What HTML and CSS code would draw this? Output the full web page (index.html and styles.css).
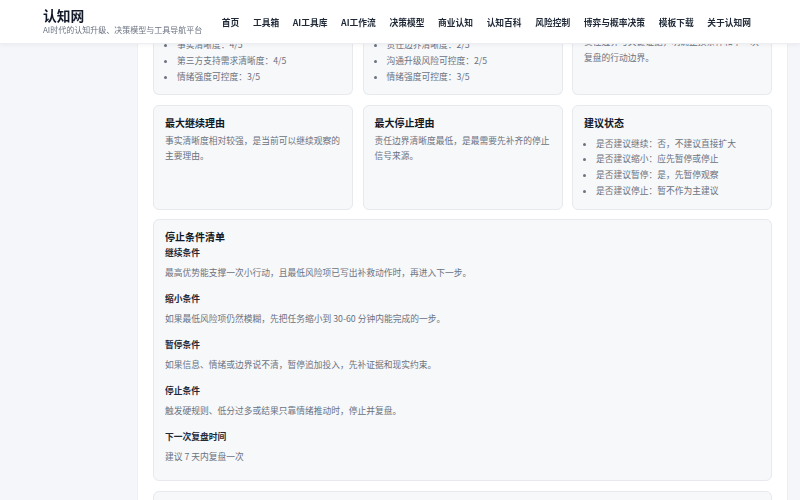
FILE: index.html
```html
<!DOCTYPE html>
<html lang="zh-CN">
<head>
<meta charset="utf-8">
<title>认知网</title>
<link rel="stylesheet" href="styles.css">
</head>
<body>
<header class="site-header">
  <div class="brand">
    <div class="brand-name">认知网</div>
    <div class="brand-sub">AI时代的认知升级、决策模型与工具导航平台</div>
  </div>
  <nav class="nav">
    <a>首页</a>
    <a>工具箱</a>
    <a>AI工具库</a>
    <a>AI工作流</a>
    <a>决策模型</a>
    <a>商业认知</a>
    <a>认知百科</a>
    <a>风险控制</a>
    <a>博弈与概率决策</a>
    <a>模板下载</a>
    <a>关于认知网</a>
  </nav>
</header>

<div class="layout">
  <aside class="side"></aside>
  <main class="panel">
    <section class="grid3">
      <div class="card card-cut">
        <ul class="list">
          <li>目标清晰度：4/5</li>
          <li>事实清晰度：4/5</li>
          <li>第三方支持需求清晰度：4/5</li>
          <li>情绪强度可控度：3/5</li>
        </ul>
      </div>
      <div class="card card-cut">
        <ul class="list">
          <li>最低风险项清晰度：2/5</li>
          <li>责任边界清晰度：2/5</li>
          <li>沟通升级风险可控度：2/5</li>
          <li>情绪强度可控度：3/5</li>
        </ul>
      </div>
      <div class="card card-cut card-cut-text">
        <p class="text">当前不适合直接扩大投入，建议先暂停，补齐责任边界与关键证据，明确止损条件和下一次复盘的行动边界。</p>
      </div>
    </section>

    <section class="grid3">
      <div class="card">
        <h3 class="card-title">最大继续理由</h3>
        <p class="text">事实清晰度相对较强，是当前可以继续观察的主要理由。</p>
      </div>
      <div class="card">
        <h3 class="card-title">最大停止理由</h3>
        <p class="text">责任边界清晰度最低，是最需要先补齐的停止信号来源。</p>
      </div>
      <div class="card">
        <h3 class="card-title">建议状态</h3>
        <ul class="list list-gap">
          <li>是否建议继续：否，不建议直接扩大</li>
          <li>是否建议缩小：应先暂停或停止</li>
          <li>是否建议暂停：是，先暂停观察</li>
          <li>是否建议停止：暂不作为主建议</li>
        </ul>
      </div>
    </section>

    <section class="card card-stop">
      <h3 class="card-title">停止条件清单</h3>
      <h4 class="sub">继续条件</h4>
      <p class="desc">最高优势能支撑一次小行动，且最低风险项已写出补救动作时，再进入下一步。</p>
      <h4 class="sub">缩小条件</h4>
      <p class="desc">如果最低风险项仍然模糊，先把任务缩小到 30-60 分钟内能完成的一步。</p>
      <h4 class="sub">暂停条件</h4>
      <p class="desc">如果信息、情绪或边界说不清，暂停追加投入，先补证据和现实约束。</p>
      <h4 class="sub">停止条件</h4>
      <p class="desc">触发硬规则、低分过多或结果只靠情绪推动时，停止并复盘。</p>
      <h4 class="sub">下一次复盘时间</h4>
      <p class="desc">建议 7 天内复盘一次</p>
    </section>

    <section class="card card-next"></section>
  </main>
</div>
</body>
</html>
```

FILE: styles.css
```css
* {
  box-sizing: border-box;
}

html, body {
  margin: 0;
  padding: 0;
}

body {
  background: #f5f6f9;
  font-family: "Noto Sans CJK SC", "Noto Sans", sans-serif;
  color: #1f2937;
  height: 500px;
  overflow: hidden;
}

.site-header {
  position: fixed;
  top: 0;
  left: 0;
  right: 0;
  height: 44px;
  background: #ffffff;
  border-bottom: 1px solid #eceef2;
  box-shadow: 0 1px 4px rgba(15, 23, 42, 0.05);
  display: flex;
  align-items: center;
  justify-content: space-between;
  padding: 0 49px 0 43px;
  z-index: 10;
}

.brand {
  display: flex;
  flex-direction: column;
}

.brand-name {
  font-size: 13.75px;
  font-weight: 700;
  line-height: 16.5px;
  color: #111827;
}

.brand-sub {
  font-size: 8px;
  line-height: 10.5px;
  margin-top: 1.5px;
  color: #6b7280;
}

.nav {
  display: flex;
  align-items: center;
  gap: 13.6px;
  margin-top: 1px;
}

.nav a {
  font-size: 8.75px;
  font-weight: 600;
  color: #1f2937;
  line-height: 11px;
  white-space: nowrap;
}

.layout {
  display: grid;
  grid-template-columns: 137px 651px;
}

.panel {
  background: #ffffff;
  border-left: 1px solid #eef0f3;
  border-right: 1px solid #eceef2;
  padding: 0 15px;
  display: flex;
  flex-direction: column;
  gap: 9.5px;
  min-height: 500px;
}

.grid3 {
  display: grid;
  grid-template-columns: repeat(3, 1fr);
  gap: 9.5px;
}

.card {
  background: #f7f8fa;
  border: 1px solid #e7e9ed;
  border-radius: 6px;
  padding: 8px 11px 10px 11px;
}

.card-cut {
  border-top: none;
  border-top-left-radius: 0;
  border-top-right-radius: 0;
  padding-top: 21.5px;
  padding-bottom: 9.5px;
}

.card-cut-text {
  padding-top: 18px;
}

.card-title {
  margin: 0;
  font-size: 10px;
  line-height: 17px;
  font-weight: 600;
  color: #111827;
}

.text {
  margin: 2px 0 0 0;
  font-size: 8.75px;
  line-height: 15.75px;
  color: #6b7280;
}

.card-cut .text {
  margin-top: 0;
}

.list {
  margin: 0;
  padding-left: 12px;
  font-size: 8.75px;
  line-height: 15.75px;
  color: #6b7280;
}

.list li::marker {
  color: #6b7280;
}

.list-gap {
  margin-top: 5px;
}

.card-stop {
  padding-bottom: 15.5px;
}

.sub {
  margin: 10.5px 0 0 0;
  font-size: 8.75px;
  line-height: 15.75px;
  font-weight: 700;
  color: #1f2937;
}

.card-title + .sub {
  margin-top: 0;
}

.desc {
  margin: 4px 0 0 0;
  font-size: 8.75px;
  line-height: 15.75px;
  color: #6b7280;
}

.card-next {
  min-height: 60px;
}
```
